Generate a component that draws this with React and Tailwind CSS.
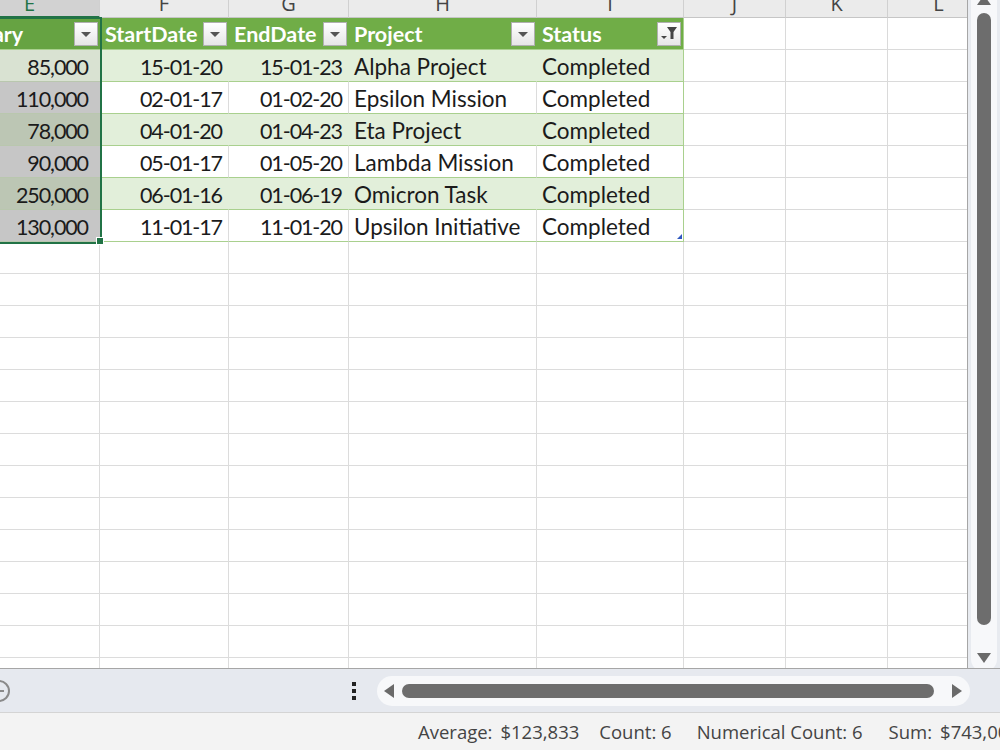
const rows = [
  ['85,000', '15-01-20', '15-01-23', 'Alpha Project', 'Completed'],
  ['110,000', '02-01-17', '01-02-20', 'Epsilon Mission', 'Completed'],
  ['78,000', '04-01-20', '01-04-23', 'Eta Project', 'Completed'],
  ['90,000', '05-01-17', '01-05-20', 'Lambda Mission', 'Completed'],
  ['250,000', '06-01-16', '01-06-19', 'Omicron Task', 'Completed'],
  ['130,000', '11-01-17', '11-01-20', 'Upsilon Initiative', 'Completed'],
]

// shading of the selected column E, by row
const eShade = ['bg-[#d9e2d2]', 'bg-[#c6c6c6]', 'bg-[#bcc6b4]', 'bg-[#c6c6c6]', 'bg-[#bcc6b4]', 'bg-[#c6c6c6]']

const cellFont = { fontFamily: 'Lato, "Open Sans", sans-serif' }

function FilterButton({ funnel }) {
  return (
    <div className="w-[24px] h-[24px] mr-[2px] shrink-0 border border-[#b0b0b0] bg-gradient-to-b from-white to-[#e6e6e6] flex items-center justify-center">
      {funnel ? (
        <svg width="22" height="22" viewBox="0 0 22 22">
          <polygon points="9,4 19,4 15.5,9 15.5,16 12.5,16 12.5,9" fill="#444" />
          <polygon points="3,13 9,13 6,16" fill="#444" />
        </svg>
      ) : (
        <div className="w-0 h-0 border-l-[5px] border-r-[5px] border-t-[5px] border-l-transparent border-r-transparent border-t-[#555] mt-[1px]" />
      )}
    </div>
  )
}

function HeaderCell({ label, last, funnel }) {
  return (
    <div className={`h-[32px] flex items-center justify-between pl-[5px] border-b border-[#a9d08e] ${last ? 'border-r border-r-[#a9d08e]' : ''}`}>
      <span className="pt-[3px] font-bold text-white text-[21.5px] leading-none whitespace-nowrap">{label}</span>
      <FilterButton funnel={funnel} />
    </div>
  )
}

export default function App() {
  const letters = ['E', 'F', 'G', 'H', 'I', 'J', 'K', 'L']
  const emptyRows = Array.from({ length: 14 })

  return (
    <div className="w-[1000px] h-[750px] overflow-hidden flex flex-col bg-white" style={cellFont}>
      {/* sheet + vertical scrollbar */}
      <div className="h-[668px] flex">
        <div className="w-[968px] h-[668px] overflow-hidden relative border-r border-[#a6a6a6]">
          <div className="-ml-[40px] grid grid-cols-[140px_129px_120px_188px_147px_102px_102px_102px]">
            {/* column letters */}
            {letters.map((l) => (
              <div
                key={l}
                className={`h-[18px] overflow-hidden flex justify-center border-r border-[#d0d0d0] ${l === 'E' ? 'bg-[#d2d2d2] border-b-2 border-b-[#217346] text-[#217346]' : 'bg-[#ebebeb] border-b border-b-[#c6c6c6] text-[#444]'}`}
                style={{ fontFamily: '"Open Sans", sans-serif' }}
              >
                <span className="text-[20px] leading-[8px]">{l}</span>
              </div>
            ))}

            {/* table header */}
            <div className="bg-[#66a342]"><HeaderCell label="Salary" /></div>
            <div className="bg-[#70ad47]"><HeaderCell label="StartDate" /></div>
            <div className="bg-[#70ad47]"><HeaderCell label="EndDate" /></div>
            <div className="bg-[#70ad47]"><HeaderCell label="Project" /></div>
            <div className="bg-[#70ad47]"><HeaderCell label="Status" last funnel /></div>
            {[0, 1, 2].map((k) => (
              <div key={k} className="h-[32px] border-r border-b border-[#dadada]" />
            ))}

            {/* table rows */}
            {rows.map((r, i) => {
              const green = i % 2 === 0
              const bg = green ? 'bg-[#e2efda]' : 'bg-white'
              const vline = green ? 'border-r-[#e2efda]' : 'border-r-[#dcdcdc]'
              const num = 'pt-[4px] text-[21.5px] tracking-[-1.1px] leading-none text-[#1b1b1b] whitespace-nowrap'
              const txt = 'pt-[3px] text-[22.5px] leading-none text-[#1b1b1b] whitespace-nowrap'
              return [
                <div key={`e${i}`} className={`h-[32px] flex items-center justify-end pr-[12px] border-b border-[#b9c7ae] ${eShade[i]} ${num}`}>{r[0]}</div>,
                <div key={`f${i}`} className={`h-[32px] flex items-center justify-end pr-[6px] border-b border-r border-b-[#a9d08e] ${vline} ${bg} ${num}`}>{r[1]}</div>,
                <div key={`g${i}`} className={`h-[32px] flex items-center justify-end pr-[6px] border-b border-r border-b-[#a9d08e] ${vline} ${bg} ${num}`}>{r[2]}</div>,
                <div key={`h${i}`} className={`h-[32px] flex items-center pl-[5px] border-b border-r border-b-[#a9d08e] ${vline} ${bg} ${txt}`}>{r[3]}</div>,
                <div key={`i${i}`} className={`relative h-[32px] flex items-center pl-[5px] border-b border-r border-[#a9d08e] ${bg} ${txt}`}>
                  {r[4]}
                  {i === rows.length - 1 && (
                    <div className="absolute right-[1px] bottom-[2px] w-0 h-0 border-l-[5px] border-b-[5px] border-l-transparent border-b-[#2f58c0]" />
                  )}
                </div>,
                <div key={`j${i}`} className="h-[32px] border-r border-b border-[#dadada]" />,
                <div key={`k${i}`} className="h-[32px] border-r border-b border-[#dadada]" />,
                <div key={`l${i}`} className="h-[32px] border-r border-b border-[#dadada]" />,
              ]
            })}

            {/* empty grid */}
            {emptyRows.map((_, i) =>
              letters.map((l) => (
                <div key={`${l}-${i}`} className="h-[32px] border-r border-b border-[#dcdcdc]" />
              ))
            )}
          </div>

          {/* selection of column E */}
          <div className="absolute left-[-10px] top-[17px] w-[112px] h-[227px] border-2 border-[#217346]" />
          <div className="absolute left-[96px] top-[237px] w-[8px] h-[8px] bg-[#217346] border border-white" />
        </div>

        {/* vertical scrollbar */}
        <div className="w-[32px] h-[668px] bg-[#e8ebf0] pl-[3px] pr-[3px]">
          <div className="h-[672px] bg-[#f7f8fa] rounded-b-full flex flex-col items-center">
            <div className="-mt-[5px] w-0 h-0 border-l-[7px] border-r-[7px] border-b-[10px] border-l-transparent border-r-transparent border-b-[#6a6a6a]" />
            <div className="mt-[8px] w-[14px] h-[612px] rounded-full bg-[#6d6d6d]" />
            <div className="mt-[28px] w-0 h-0 border-l-[7px] border-r-[7px] border-t-[10px] border-l-transparent border-r-transparent border-t-[#6a6a6a]" />
          </div>
        </div>
      </div>

      {/* sheet tabs strip / horizontal scrollbar */}
      <div className="h-[44px] bg-[#e6e9ef] border-t border-[#a6a6a6] flex items-center">
        <div className="-ml-[12px] w-[22px] h-[22px] rounded-full border-2 border-[#8a8a8a] flex items-center justify-center">
          <div className="w-[10px] h-[2px] bg-[#8a8a8a]" />
        </div>
        <div className="ml-[342px] flex flex-col gap-[3px]">
          <div className="w-[4px] h-[4px] bg-[#222]" />
          <div className="w-[4px] h-[4px] bg-[#222]" />
          <div className="w-[4px] h-[4px] bg-[#222]" />
        </div>
        <div className="ml-[21px] w-[593px] h-[30px] rounded-full bg-[#f7f8fa] flex items-center">
          <div className="ml-[7px] w-0 h-0 border-t-[7px] border-b-[7px] border-r-[10px] border-t-transparent border-b-transparent border-r-[#6a6a6a]" />
          <div className="ml-[8px] w-[532px] h-[14px] rounded-full bg-[#6d6d6d]" />
          <div className="ml-[18px] w-0 h-0 border-t-[7px] border-b-[7px] border-l-[10px] border-t-transparent border-b-transparent border-l-[#6a6a6a]" />
        </div>
      </div>

      {/* status bar */}
      <div
        className="h-[38px] bg-[#f3f3f3] border-t border-[#d4d4d4] flex items-center text-[18.5px] text-[#444] whitespace-nowrap"
        style={{ fontFamily: '"Open Sans", "Noto Sans", sans-serif' }}
      >
        <span className="ml-[418px]">Average:</span>
        <span className="ml-[8px]">$123,833</span>
        <span className="ml-[20px]">Count: 6</span>
        <span className="ml-[25px]">Numerical Count: 6</span>
        <span className="ml-[26px]">Sum:</span>
        <span className="ml-[8px]">$743,000</span>
      </div>
    </div>
  )
}
